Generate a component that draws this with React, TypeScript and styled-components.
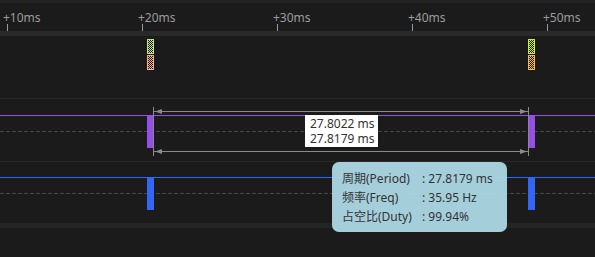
import * as React from "react";
import styled, { createGlobalStyle } from "styled-components";

const GlobalStyle = createGlobalStyle`
  html, body {
    margin: 0;
    padding: 0;
    background: #1b1b1b;
  }
  body {
    font-family: "Noto Sans", "Noto Sans CJK SC", sans-serif;
  }
`;

const Screen = styled.div`
  position: relative;
  width: 595px;
  height: 257px;
  display: flex;
  flex-direction: column;
  background: #1b1b1b;
  overflow: hidden;
`;

const Ruler = styled.div`
  height: 28px;
  border-top: 3px solid #232323;
  display: flex;
  padding-left: 3px;
  flex: none;
  box-sizing: content-box;
`;

const TickCell = styled.div`
  width: 135px;
  flex: none;
  display: flex;
  flex-direction: column;
  padding-top: 9px;
`;

const TickLabel = styled.span`
  font-size: 12px;
  line-height: 12px;
  height: 12px;
  color: #9c9c9c;
  white-space: nowrap;
`;

const TickMark = styled.div`
  margin: 0 0 0 4px;
  width: 1px;
  height: 7px;
  background: #9a9a9a;
`;

const RulerEdge = styled.div`
  height: 5px;
  background: #2a2a2a;
  flex: none;
`;

const Track = styled.div<{ $h: number }>`
  position: relative;
  height: ${(p) => p.$h}px;
  flex: none;
`;

const Divider = styled.div`
  height: 1px;
  background: #272727;
  flex: none;
`;

const Band = styled.div`
  height: 5px;
  background: #242424;
  flex: none;
`;

const Filler = styled.div`
  flex: 1;
`;

const MarkStack = styled.div<{ $x: number }>`
  position: absolute;
  left: ${(p) => p.$x}px;
  top: 3px;
  display: flex;
  flex-direction: column;
  gap: 1px;
`;

const CheckMark = styled.div<{ $color: string }>`
  width: 5px;
  height: 13px;
  border: 1px solid ${(p) => p.$color};
  background: repeating-conic-gradient(${(p) => p.$color} 0 25%, #161616 0 50%) 0 0 / 2px 2px;
`;

const Lane = styled.div<{ $top: number; $color: string }>`
  position: absolute;
  left: 0;
  right: 0;
  top: ${(p) => p.$top}px;
  height: 33px;
  border-top: 1px solid ${(p) => p.$color};
  box-sizing: border-box;
  background: repeating-linear-gradient(90deg, #464646 0 4px, transparent 4px 6px) 0 15px / 100% 1px no-repeat;
`;

const Pulse = styled.div<{ $x: number; $color: string }>`
  position: absolute;
  left: ${(p) => p.$x}px;
  top: -1px;
  width: 7px;
  height: 33px;
  background: ${(p) => p.$color};
`;

const MeasureSvg = styled.svg`
  position: absolute;
  left: 0;
  top: 0;
  width: 595px;
  height: 62px;
  overflow: visible;
`;

const MeasureLabel = styled.div`
  position: absolute;
  left: 305px;
  top: 16px;
  width: 73px;
  height: 32px;
  background: #ffffff;
  color: #333333;
  font-size: 12px;
  line-height: 15px;
  padding: 1px 0 0 5px;
  box-sizing: border-box;
  display: flex;
  flex-direction: column;
`;

const Tooltip = styled.div`
  position: absolute;
  left: 332px;
  top: 162px;
  width: 175px;
  height: 70px;
  box-sizing: border-box;
  padding: 7px 10px;
  border-radius: 7px;
  background: rgba(173, 216, 230, 0.95);
  color: #333333;
  font-family: "Noto Sans", "Noto Sans CJK SC", sans-serif;
  font-size: 12px;
  line-height: 19px;
  display: grid;
  grid-template-columns: 80px auto;
`;

const TipText = styled.span`
  white-space: nowrap;
`;

const ticks = ["+10ms", "+20ms", "+30ms", "+40ms", "+50ms"];

const edges = [147, 528];

const stats = [
  { key: "周期(Period)", value: ": 27.8179 ms" },
  { key: "频率(Freq)", value: ": 35.95 Hz" },
  { key: "占空比(Duty)", value: ": 99.94%" },
];

const Measure = () => (
  <MeasureSvg viewBox="0 0 595 62">
    <g stroke="#8a8a8a" strokeWidth="1" shapeRendering="crispEdges">
      <line x1="153.5" y1="8" x2="153.5" y2="57" />
      <line x1="528.5" y1="8" x2="528.5" y2="57" />
      <line x1="154" y1="12.5" x2="528" y2="12.5" />
      <line x1="154" y1="52.5" x2="528" y2="52.5" />
    </g>
    <g fill="#8a8a8a">
      <polygon points="155,12.5 162,10 162,15" />
      <polygon points="527,12.5 520,10 520,15" />
      <polygon points="155,52.5 162,50 162,55" />
      <polygon points="527,52.5 520,50 520,55" />
    </g>
  </MeasureSvg>
);

const App = (): React.ReactElement => {
  return (
    <>
      <GlobalStyle />
      <Screen>
        <Ruler>
          {ticks.map((t) => (
            <TickCell key={t}>
              <TickLabel>{t}</TickLabel>
              <TickMark />
            </TickCell>
          ))}
        </Ruler>
        <RulerEdge />

        <Track $h={62}>
          {edges.map((x) => (
            <MarkStack key={x} $x={x}>
              <CheckMark $color="#c6ef4e" />
              <CheckMark $color="#f4bb52" />
            </MarkStack>
          ))}
        </Track>
        <Divider />

        <Track $h={62}>
          <Lane $top={16} $color="#9450e6">
            {edges.map((x) => (
              <Pulse key={x} $x={x} $color="#9450e6" />
            ))}
          </Lane>
          <Measure />
          <MeasureLabel>
            <span>27.8022 ms</span>
            <span>27.8179 ms</span>
          </MeasureLabel>
        </Track>
        <Divider />

        <Track $h={61}>
          <Lane $top={15} $color="#3366f5">
            {edges.map((x) => (
              <Pulse key={x} $x={x} $color="#3366f5" />
            ))}
          </Lane>
        </Track>
        <Band />
        <Filler />

        <Tooltip>
          {stats.map((s) => (
            <React.Fragment key={s.key}>
              <TipText>{s.key}</TipText>
              <TipText>{s.value}</TipText>
            </React.Fragment>
          ))}
        </Tooltip>
      </Screen>
    </>
  );
};

export default App;
